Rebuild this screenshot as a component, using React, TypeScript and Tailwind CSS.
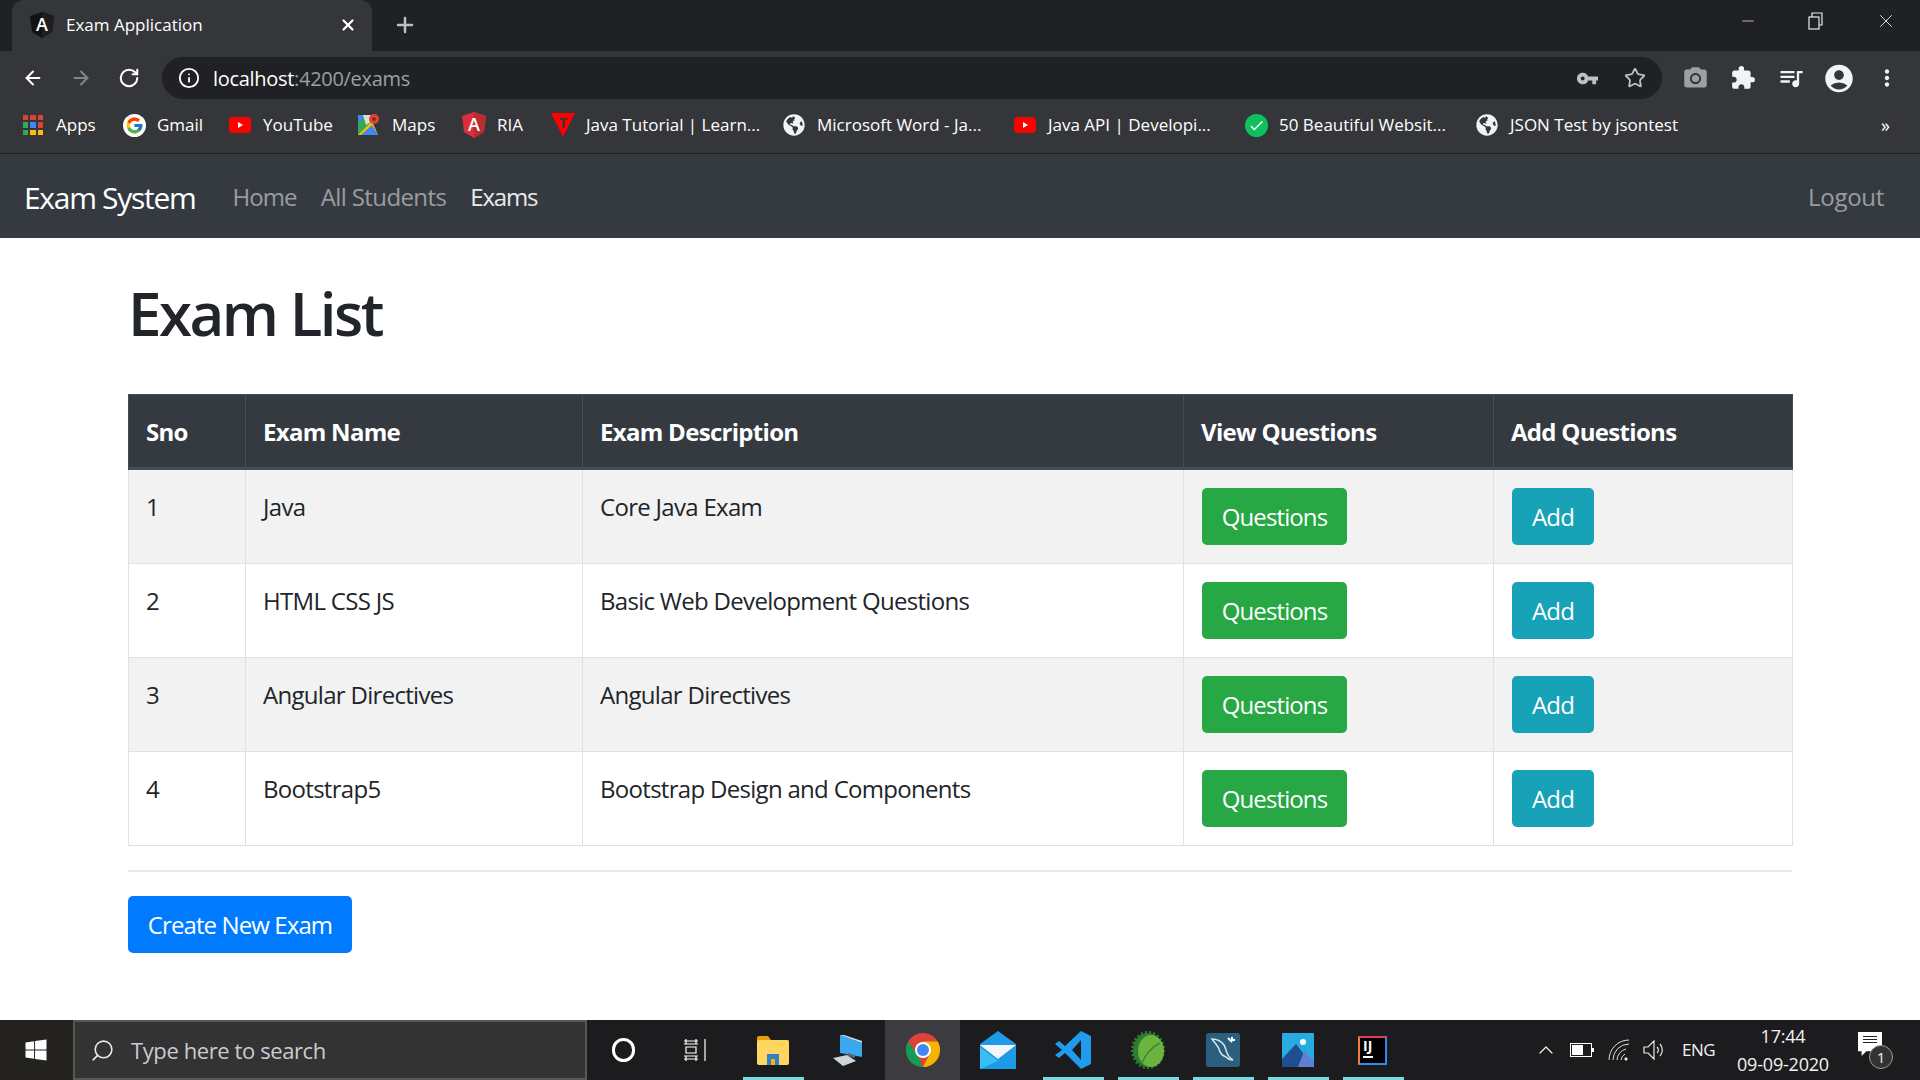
import { ArrowLeft, ArrowRight, Info, Plus, RotateCw, Star, X, ChevronUp, Search, Minus } from "lucide-react";
import { FaGlobeAmericas, FaWindows } from "react-icons/fa";
import { FcGoogle } from "react-icons/fc";
import { MdAccountCircle, MdCameraAlt, MdExtension, MdMoreVert, MdQueueMusic, MdVpnKey, MdCheck } from "react-icons/md";
import type { ReactNode } from "react";

const FONT = "font-['Open_Sans','Noto_Sans',sans-serif]";

function AngularIcon({ dark = false }: { dark?: boolean }) {
  return (
    <svg width="24" height="26" viewBox="0 0 24 26">
      <polygon points="12,0 24,4 22,20 12,26 2,20 0,4" fill={dark ? "#111214" : "#dd2c3a"} />
      <polygon points="12,0 24,4 22,20 12,26" fill={dark ? "#1d1e20" : "#b52e31"} />
      <text x="12" y="19" textAnchor="middle" fontSize="18" fontWeight="600" fill="#fff" fontFamily="Open Sans">A</text>
    </svg>
  );
}

function AppsIcon() {
  const colors = ["#d94235", "#d94235", "#d94235", "#34a853", "#4285f4", "#d94235", "#34a853", "#fbbc04", "#fbbc04"];
  return (
    <div className="grid grid-cols-3 gap-[2px] w-[20px] h-[20px]">
      {colors.map((c, i) => (
        <div key={i} style={{ backgroundColor: c }} />
      ))}
    </div>
  );
}

function YoutubeIcon() {
  return (
    <svg width="22" height="16" viewBox="0 0 22 16">
      <rect width="22" height="16" rx="4" fill="#ff0000" />
      <polygon points="9,5 9,11 14,8" fill="#fff" />
    </svg>
  );
}

function MapsIcon() {
  return (
    <svg width="22" height="24" viewBox="0 0 22 24">
      <polygon points="0,2 14,2 14,22 0,22" fill="#34a853" />
      <polygon points="0,22 14,8 20,22" fill="#fbbc04" />
      <polygon points="0,2 8,2 0,10" fill="#4285f4" />
      <polygon points="3,22 14,12 20,22" fill="#4285f4" />
      <polygon points="5,2 14,2 14,8 8,12" fill="#d9e2d0" />
      <circle cx="16" cy="6" r="5" fill="#db4437" />
      <circle cx="16" cy="6" r="2" fill="#8f2a21" />
    </svg>
  );
}

function TutorialIcon() {
  return (
    <svg width="24" height="24" viewBox="0 0 24 24">
      <polygon points="0,0 24,0 12,24" fill="#ff0000" />
      <text x="12" y="15" textAnchor="middle" fontSize="14" fontWeight="700" fill="#35363a" fontFamily="Open Sans">T</text>
    </svg>
  );
}

function GlobeIcon() {
  return <FaGlobeAmericas size={22} className="text-[#f1f3f4]" />;
}

function CheckIcon() {
  return (
    <div className="w-[23px] h-[23px] rounded-full bg-[#0fc15c] flex items-center justify-center">
      <MdCheck size={17} className="text-white" />
    </div>
  );
}

const bookmarks: { label: string; icon: ReactNode; width: string }[] = [
  { label: "Apps", icon: <AppsIcon />, width: "w-[101px]" },
  { label: "Gmail", icon: <div className="w-[23px] h-[23px] rounded-full bg-white flex items-center justify-center"><FcGoogle size={19} /></div>, width: "w-[106px]" },
  { label: "YouTube", icon: <YoutubeIcon />, width: "w-[129px]" },
  { label: "Maps", icon: <MapsIcon />, width: "w-[105px]" },
  { label: "RIA", icon: <AngularIcon />, width: "w-[89px]" },
  { label: "Java Tutorial | Learn...", icon: <TutorialIcon />, width: "w-[231px]" },
  { label: "Microsoft Word - Ja...", icon: <GlobeIcon />, width: "w-[231px]" },
  { label: "Java API | Developi...", icon: <YoutubeIcon />, width: "w-[231px]" },
  { label: "50 Beautiful Websit...", icon: <CheckIcon />, width: "w-[231px]" },
  { label: "JSON Test by jsontest", icon: <GlobeIcon />, width: "w-[240px]" },
];

function ChromeBar() {
  return (
    <div className={`${FONT} shrink-0 h-[154px] bg-[#35363a] text-white border-b border-[#222326]`}>
      {/* Tabs */}
      <div className="h-[51px] bg-[#202124] flex items-end">
        <div className="ml-[12px] w-[360px] h-[51px] bg-[#35363a] rounded-t-[12px] flex items-center pl-[18px] pr-[15px] pb-[2px]">
          <AngularIcon dark />
          <span className="ml-[12px] text-[17px]">Exam Application</span>
          <X size={18} strokeWidth={3} className="ml-auto text-white" />
        </div>
        <div className="h-[51px] flex items-center ml-[21px] pb-[2px]">
          <Plus size={24} strokeWidth={2.5} className="text-[#bdc1c6]" />
        </div>
        <div className="ml-auto h-[42px] self-start flex items-center text-[#e8eaed]">
          <Minus size={18} strokeWidth={1} className="mr-[50px]" />
          <svg width="18" height="18" viewBox="0 0 18 18" className="mr-[50px]" fill="none" stroke="currentColor" strokeWidth="1.2">
            <rect x="2" y="5" width="10" height="12" />
            <path d="M5 5V1h10v12h-3" />
          </svg>
          <X size={22} strokeWidth={1} className="mr-[23px]" />
        </div>
      </div>

      {/* Address bar */}
      <div className="h-[50px] pt-[6px] flex items-start">
        <div className="w-[162px] h-[42px] flex items-center pl-[22px] gap-[26px]">
          <ArrowLeft size={22} strokeWidth={2.2} />
          <ArrowRight size={22} strokeWidth={2.2} className="text-[#80868b]" />
          <RotateCw size={22} strokeWidth={2.2} />
        </div>
        <div className="w-[1500px] h-[42px] bg-[#202124] rounded-full flex items-center pl-[16px] pr-[16px]">
          <Info size={22} strokeWidth={2} />
          <span className="ml-[13px] text-[20px] tracking-[-0.3px] pt-[1px]">
            localhost<span className="text-[#9aa0a6]">:4200/exams</span>
          </span>
          <MdVpnKey size={23} className="ml-auto text-[#bdc1c6] mr-[25px]" />
          <Star size={22} strokeWidth={2} className="text-[#bdc1c6]" />
        </div>
        <div className="flex-1 h-[42px] flex items-center pl-[10px] text-[#f1f3f4]">
          <MdCameraAlt size={27} className="text-[#9aa0a6] w-[47px]" />
          <MdExtension size={26} className="w-[48px]" />
          <MdQueueMusic size={28} className="w-[48px]" />
          <MdAccountCircle size={33} className="w-[48px]" />
          <MdMoreVert size={26} className="w-[48px]" />
        </div>
      </div>

      {/* Bookmarks */}
      <div className="h-[48px] flex items-center pl-[21px] pr-[30px] text-[17px]">
        {bookmarks.map((b) => (
          <div key={b.label} className={`${b.width} flex items-center shrink-0`}>
            <div className="w-[24px] flex justify-center shrink-0">{b.icon}</div>
            <span className="ml-[11px] whitespace-nowrap">{b.label}</span>
          </div>
        ))}
        <span className="ml-auto text-[18px]">»</span>
      </div>
    </div>
  );
}

function NavBar() {
  return (
    <nav className={`${FONT} shrink-0 h-[84px] bg-[#343a40] flex items-center pl-[24px] pr-[36px] pt-[2px]`}>
      <span className="text-[30px] tracking-[-1.3px] text-white">Exam System</span>
      <span className="ml-[37px] text-[24px] tracking-[-0.9px] text-white/50">Home</span>
      <span className="ml-[24px] text-[24px] tracking-[-0.6px] text-white/50">All Students</span>
      <span className="ml-[24px] text-[24px] tracking-[-1.2px] text-white/90">Exams</span>
      <span className="ml-auto text-[24px] tracking-[-0.3px] text-white/50">Logout</span>
    </nav>
  );
}

const exams = [
  { sno: 1, name: "Java", description: "Core Java Exam" },
  { sno: 2, name: "HTML CSS JS", description: "Basic Web Development Questions" },
  { sno: 3, name: "Angular Directives", description: "Angular Directives" },
  { sno: 4, name: "Bootstrap5", description: "Bootstrap Design and Components" },
];

const headCell = "border border-[#454d55] border-b-[3px] px-[17px] pt-[19px] pb-[17px] text-left font-bold leading-[36px]";
const bodyCell = "border border-[#dee2e6] px-[17px] pt-[19px] pb-[17px] align-top leading-[36px]";

function ExamTable() {
  return (
    <table className="w-[1664px] table-fixed border-collapse text-[24px] tracking-[-0.7px] text-[#212529]">
      <colgroup>
        <col className="w-[117px]" />
        <col className="w-[337px]" />
        <col className="w-[601px]" />
        <col className="w-[310px]" />
        <col className="w-[299px]" />
      </colgroup>
      <thead className="bg-[#343a40] text-white">
        <tr>
          <th className={headCell}>Sno</th>
          <th className={headCell}>Exam Name</th>
          <th className={headCell}>Exam Description</th>
          <th className={headCell}>View Questions</th>
          <th className={headCell}>Add Questions</th>
        </tr>
      </thead>
      <tbody>
        {exams.map((exam) => (
          <tr key={exam.sno} className="odd:bg-[#f2f2f2]">
            <td className={bodyCell}>{exam.sno}</td>
            <td className={bodyCell}>{exam.name}</td>
            <td className={bodyCell}>{exam.description}</td>
            <td className={bodyCell}>
              <button className="block ml-px -mt-px mb-px w-[145px] h-[57px] pt-px rounded-[5px] bg-[#28a745] text-white tracking-[-0.9px]">Questions</button>
            </td>
            <td className={bodyCell}>
              <button className="block ml-px -mt-px mb-px w-[82px] h-[57px] pt-px rounded-[5px] bg-[#17a2b8] text-white tracking-[-0.9px]">Add</button>
            </td>
          </tr>
        ))}
      </tbody>
    </table>
  );
}

function ChromeLogo() {
  return (
    <svg width="34" height="34" viewBox="0 0 34 34">
      <circle cx="17" cy="17" r="17" fill="#db4437" />
      <path d="M17 34A17 17 0 0 1 2.3 8.5L10 20l7 14z" fill="#0f9d58" />
      <path d="M17 34A17 17 0 0 0 31.7 8.5H17l7 12z" fill="#f4b400" />
      <circle cx="17" cy="17" r="8" fill="#fff" />
      <circle cx="17" cy="17" r="6" fill="#4285f4" />
    </svg>
  );
}

function Slot({ children, open = false, active = false, narrow = false }: { children: ReactNode; open?: boolean; active?: boolean; narrow?: boolean }) {
  return (
    <div className={`${narrow ? "w-[73px]" : "w-[75px]"} h-full relative flex items-center justify-center shrink-0 ${active ? "bg-[#3c3c40]" : ""}`}>
      {children}
      {open && <div className="absolute bottom-0 left-[8px] right-[6px] h-[3px] bg-[#76dbe3]" />}
    </div>
  );
}

function TaskBar() {
  return (
    <div className={`${FONT} shrink-0 h-[60px] bg-[#1c1c1e] text-white flex items-center`}>
      <div className="w-[73px] h-full bg-[#23221f] flex items-center justify-center">
        <FaWindows size={24} className="-ml-[2px]" />
      </div>
      <div className="w-[514px] h-full bg-[#333333] border-2 border-[#575757] flex items-center pl-[15px]">
        <Search size={25} strokeWidth={1.5} className="-scale-x-100 text-[#e8e8e8]" />
        <span className="ml-[16px] text-[22px] tracking-[-0.4px] text-[#c9ccd1]">Type here to search</span>
      </div>
      <Slot narrow>
        <div className="w-[23px] h-[24px] rounded-full border-[3px] border-white" />
      </Slot>
      <Slot>
        <svg width="26" height="24" viewBox="0 0 26 24" fill="none" stroke="#fff" strokeWidth="1.2" className="-ml-[3px]">
          <path d="M1 3h14M1 6h14M3 9h10v6H3zM1 18h14M1 21h14M3 18v5M13 18v5M3 1v5M13 1v5M22 1v22" />
        </svg>
      </Slot>
      <Slot open>
        <svg width="34" height="32" viewBox="0 0 34 32">
          <path d="M1 4a2 2 0 0 1 2-2h9l3 4h16a2 2 0 0 1 2 2v5H1z" fill="#e3a008" />
          <rect x="1" y="6" width="32" height="25" rx="2" fill="#ffd75e" />
          <path d="M11 31V20h12v11h-4v-6h-4v6z" fill="#2f80c8" />
          <rect x="15" y="25" width="4" height="6" fill="#f4b400" />
        </svg>
      </Slot>
      <Slot>
        <svg width="34" height="34" viewBox="0 0 34 34">
          <polygon points="9,2 31,10 31,24 9,20" fill="#3ba7ee" />
          <polygon points="9,2 13,2 31,8 31,10" fill="#bfe3fa" />
          <polygon points="2,25 16,22 25,28 12,33" fill="#cfd4d8" />
          <polygon points="17,20 24,22 24,25 17,23" fill="#5d6770" />
        </svg>
      </Slot>
      <Slot active>
        <ChromeLogo />
      </Slot>
      <Slot>
        <svg width="36" height="38" viewBox="0 0 36 38">
          <polygon points="18,0 36,13 36,38 0,38 0,13" fill="#1e9be8" />
          <polygon points="0,14 36,14 18,28" fill="#f4f6f8" />
          <polygon points="0,38 0,16 18,30" fill="#38c0f5" />
        </svg>
      </Slot>
      <Slot open>
        <svg width="36" height="38" viewBox="0 0 36 38">
          <path d="M26 0 36 5v28l-10 5L10 22l-6 5-4-3 7-5-7-6 4-3 6 5z" fill="#1f9cf0" />
          <path d="M26 9v20l-9-10z" fill="#1c1c1e" />
        </svg>
      </Slot>
      <Slot open>
        <svg width="36" height="38" viewBox="0 0 36 38">
          <ellipse cx="18" cy="19" rx="15" ry="17" fill="#2e7d32" stroke="#2e7d32" strokeWidth="4" strokeDasharray="2 2" />
          <ellipse cx="21" cy="20" rx="13" ry="16" fill="#6db33f" />
          <path d="M12 32C16 22 22 16 30 12" fill="none" stroke="#3f8a2f" strokeWidth="1.5" />
        </svg>
      </Slot>
      <Slot open>
        <div className="w-[34px] h-[34px] rounded-[3px] bg-[#2b5f80] flex items-center justify-center">
          <svg width="30" height="30" viewBox="0 0 30 30" fill="none" stroke="#d5e4ee" strokeWidth="1.5">
            <path d="M4 4c5 0 9 2 12 6 2 3 2 7 4 10 1 2 3 4 5 5-3 0-5-1-7-3-3-1-6-4-7-8-1-3-4-6-7-10z" />
            <path d="M20 3l4 4M24 2v3h3" strokeWidth="2" stroke="#ffffff" />
          </svg>
        </div>
      </Slot>
      <Slot open>
        <svg width="32" height="34" viewBox="0 0 32 34">
          <rect width="32" height="34" rx="1" fill="#29abe2" />
          <circle cx="21" cy="9" r="3" fill="#fff" />
          <polygon points="0,34 0,26 14,11 32,34" fill="#1d4f91" />
          <polygon points="16,34 22,18 32,28 32,34" fill="#5f7fd6" />
        </svg>
      </Slot>
      <Slot open>
        <div className="w-[29px] h-[29px] bg-black border-[2px] border-l-[#f0803c] border-t-[#e0365f] border-r-[#2f8cef] border-b-[#2f8cef] flex flex-col px-[3px]">
          <span className="text-[14px] leading-[15px] font-bold">IJ</span>
          <div className="w-[10px] h-[2px] bg-white mt-[3px]" />
        </div>
      </Slot>

      <div className="ml-auto h-full flex items-center text-[#f2f2f2]">
        <ChevronUp size={24} strokeWidth={1.2} className="mr-[12px]" />
        <svg width="24" height="14" viewBox="0 0 24 14" className="mr-[14px]">
          <rect x="0.5" y="0.5" width="21" height="13" fill="none" stroke="#fff" />
          <rect x="2" y="2" width="11" height="10" fill="#fff" />
          <rect x="22" y="5" width="2" height="4" fill="#fff" />
        </svg>
        <svg width="22" height="22" viewBox="0 0 22 22" fill="none" stroke="#ddd" strokeWidth="1" className="mr-[12px]">
          <path d="M1 21A20 20 0 0 1 21 1M5 21A16 16 0 0 1 21 5M9 21a12 12 0 0 1 9-11M13 21a8 8 0 0 1 4-6" />
          <circle cx="18" cy="20" r="1.2" fill="#fff" />
        </svg>
        <svg width="24" height="24" viewBox="0 0 24 24" fill="none" stroke="#e8e8e8" strokeWidth="1.2" className="mr-[16px]">
          <path d="M2 9h4l6-6v18l-6-6H2zM15 9a4 4 0 0 1 0 6M18 6a9 9 0 0 1 0 12" />
        </svg>
        <span className="text-[17px] tracking-[-0.5px] w-[46px]">ENG</span>
        <div className="w-[110px] flex flex-col items-center text-[18px] tracking-[-0.2px] leading-[28px]">
          <span>17:44</span>
          <span>09-09-2020</span>
        </div>
        <div className="relative w-[24px] h-[28px] ml-[20px] mr-[38px] -mt-[8px]">
          <div className="w-[24px] h-[24px] bg-white [clip-path:polygon(0_0,100%_0,100%_80%,35%_80%,15%_100%,15%_80%,0_80%)] flex flex-col items-center pt-[4px] gap-[2px]">
            <div className="w-[14px] h-px bg-[#222]" />
            <div className="w-[14px] h-px bg-[#222]" />
            <div className="w-[14px] h-px bg-[#222]" />
          </div>
          <div className="absolute left-[11px] top-[13px] w-[24px] h-[24px] rounded-full bg-[#333] border border-[#9a9a9a] flex items-center justify-center text-[15px] leading-none">
            1
          </div>
        </div>
      </div>
    </div>
  );
}

export default function App() {
  return (
    <div className={`${FONT} h-screen overflow-hidden flex flex-col bg-white`}>
      <ChromeBar />
      <NavBar />
      <main className="flex-1 px-[128px] pt-[39px]">
        <h1 className="text-[60px] leading-[72px] font-semibold tracking-[-2.5px] text-[#212529] mb-[45px]">Exam List</h1>
        <ExamTable />
        <hr className="mt-[24px] mb-[24px] border-t-2 border-[#e9e9e9]" />
        <button className="block w-[224px] h-[57px] rounded-[5px] bg-[#007bff] text-white text-[24px] tracking-[-0.9px]">
          Create New Exam
        </button>
      </main>
      <TaskBar />
    </div>
  );
}
